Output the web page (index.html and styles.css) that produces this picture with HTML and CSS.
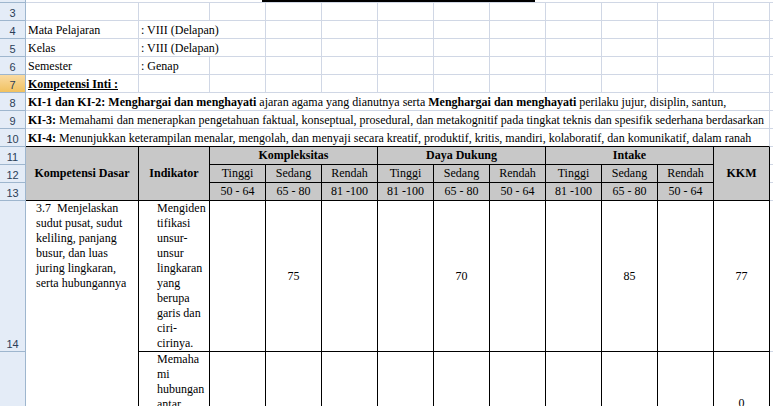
FILE: index.html
```html
<!DOCTYPE html>
<html>
<head>
<meta charset="utf-8">
<title>Analisis KKM</title>
<link rel="stylesheet" href="styles.css">
</head>
<body>
<table class="sheet">
<colgroup>
<col class="c-hd"><col class="c-a"><col class="c-b"><col class="c-n" span="10"><col class="c-m">
</colgroup>
<tbody>
<tr class="r2"><th class="rh"></th><td colspan="13" class="top"><div class="title-rule"></div></td></tr>
<tr class="r"><th class="rh">3</th><td></td><td></td><td></td><td></td><td></td><td></td><td></td><td></td><td></td><td></td><td></td><td></td><td></td></tr>
<tr class="r"><th class="rh">4</th><td>Mata Pelajaran</td><td colspan="2">: VIII (Delapan)</td><td></td><td></td><td></td><td></td><td></td><td></td><td></td><td></td><td></td><td></td></tr>
<tr class="r"><th class="rh">5</th><td>Kelas</td><td colspan="2">: VIII (Delapan)</td><td></td><td></td><td></td><td></td><td></td><td></td><td></td><td></td><td></td><td></td></tr>
<tr class="r"><th class="rh">6</th><td>Semester</td><td>: Genap</td><td></td><td></td><td></td><td></td><td></td><td></td><td></td><td></td><td></td><td></td><td></td></tr>
<tr class="r"><th class="rh sel">7</th><td class="ki-title">Kompetensi Inti :</td><td></td><td></td><td></td><td></td><td></td><td></td><td></td><td></td><td></td><td></td><td></td><td></td></tr>
<tr class="r"><th class="rh">8</th><td colspan="12"><b>KI-1 dan KI-2: Menghargai dan menghayati</b> ajaran agama yang dianutnya serta <b>Menghargai dan menghayati</b> perilaku jujur, disiplin, santun,</td><td></td></tr>
<tr class="r"><th class="rh">9</th><td colspan="12"><b>KI-3:</b> Memahami dan menerapkan pengetahuan faktual, konseptual, prosedural, dan metakognitif pada tingkat teknis dan spesifik sederhana berdasarkan</td><td></td></tr>
<tr class="r"><th class="rh">10</th><td colspan="12" class="table-top"><b>KI-4:</b> Menunjukkan keterampilan menalar, mengolah, dan menyaji secara kreatif, produktif, kritis, mandiri, kolaboratif, dan komunikatif, dalam ranah</td><td></td></tr>
<tr class="r"><th class="rh">11</th><td class="hd b" rowspan="3">Kompetensi Dasar</td><td class="hd b" rowspan="3">Indikator</td><td class="hd b" colspan="3">Kompleksitas</td><td class="hd b" colspan="3">Daya Dukung</td><td class="hd b" colspan="3">Intake</td><td class="hd b" rowspan="3">KKM</td><td></td></tr>
<tr class="r"><th class="rh">12</th><td class="hd">Tinggi</td><td class="hd">Sedang</td><td class="hd">Rendah</td><td class="hd">Tinggi</td><td class="hd">Sedang</td><td class="hd">Rendah</td><td class="hd">Tinggi</td><td class="hd">Sedang</td><td class="hd">Rendah</td><td></td></tr>
<tr class="r"><th class="rh">13</th><td class="hd">50 - 64</td><td class="hd">65 - 80</td><td class="hd">81 -100</td><td class="hd">81 -100</td><td class="hd">65 - 80</td><td class="hd">50 - 64</td><td class="hd">81 -100</td><td class="hd">65 - 80</td><td class="hd">50 - 64</td><td></td></tr>
<tr class="r14"><th class="rh">14</th><td class="kd" rowspan="2">3.7&nbsp; Menjelaskan<br>sudut pusat, sudut<br>keliling, panjang<br>busur, dan luas<br>juring lingkaran,<br>serta hubungannya</td><td class="ind">Mengiden<br>tifikasi<br>unsur-<br>unsur<br>lingkaran<br>yang<br>berupa<br>garis dan<br>ciri-<br>cirinya.</td><td class="v"></td><td class="v">75</td><td class="v"></td><td class="v"></td><td class="v">70</td><td class="v"></td><td class="v"></td><td class="v">85</td><td class="v"></td><td class="v">77</td><td></td></tr>
<tr class="r15"><th class="rh"></th><td class="ind">Memaha<br>mi<br>hubungan<br>antar</td><td class="v"></td><td class="v"></td><td class="v"></td><td class="v"></td><td class="v"></td><td class="v"></td><td class="v"></td><td class="v"></td><td class="v"></td><td class="v">0</td><td></td></tr>
</tbody>
</table>
</body>
</html>
```

FILE: styles.css
```css
html, body {
  margin: 0;
  padding: 0;
  overflow: hidden;
  background: #ffffff;
}
body {
  width: 773px;
  height: 406px;
}
.sheet {
  border-collapse: separate;
  border-spacing: 0;
  table-layout: fixed;
  width: 810px;
  font-family: "Liberation Serif", "Times New Roman", serif;
  font-size: 12px;
  line-height: 15px;
  color: #000;
}
.c-hd { width: 26px; }
.c-a { width: 113px; }
.c-b { width: 71px; }
.c-n { width: 56px; }
.c-m { width: 40px; }

.sheet td {
  padding: 0 2px;
  border-right: 1px solid #d0d7e5;
  border-bottom: 1px solid #d0d7e5;
  vertical-align: bottom;
  white-space: nowrap;
  overflow: hidden;
}
.sheet th.rh {
  padding: 0;
  background: #e4ecf7;
  border-right: 1px solid #9eb6ce;
  border-bottom: 1px solid #9eb6ce;
  font-family: "Liberation Sans", Arial, sans-serif;
  font-size: 11px;
  font-weight: normal;
  line-height: 14px;
  color: #2c3e58;
  text-align: center;
  vertical-align: bottom;
}
.sheet th.sel {
  background: linear-gradient(#f9dba3, #f1c15f);
}
tr.r2 { height: 3px; }
tr.r { height: 18px; }
tr.r14 { height: 150px; }
tr.r15 { height: 104px; }

.sheet td.top {
  padding: 0;
  font-size: 0;
  line-height: 0;
  vertical-align: top;
}
.title-rule {
  margin-left: 236px;
  width: 273px;
  height: 2px;
  background: #000;
}
.ki-title {
  font-weight: bold;
  text-decoration: underline;
}
.sheet td.table-top {
  border-bottom-color: #000;
}
.sheet td.hd {
  background: #c8c8c8;
  border-right-color: #000;
  border-bottom-color: #000;
  text-align: center;
  vertical-align: middle;
}
.sheet td.b {
  font-weight: bold;
}
.sheet td.kd,
.sheet td.ind,
.sheet td.v {
  border-right-color: #000;
  border-bottom-color: #000;
}
.sheet td.kd {
  vertical-align: top;
  padding-left: 10px;
}
.sheet td.ind {
  vertical-align: top;
  padding-left: 18px;
}
.sheet td.v {
  vertical-align: middle;
  text-align: center;
}
```
